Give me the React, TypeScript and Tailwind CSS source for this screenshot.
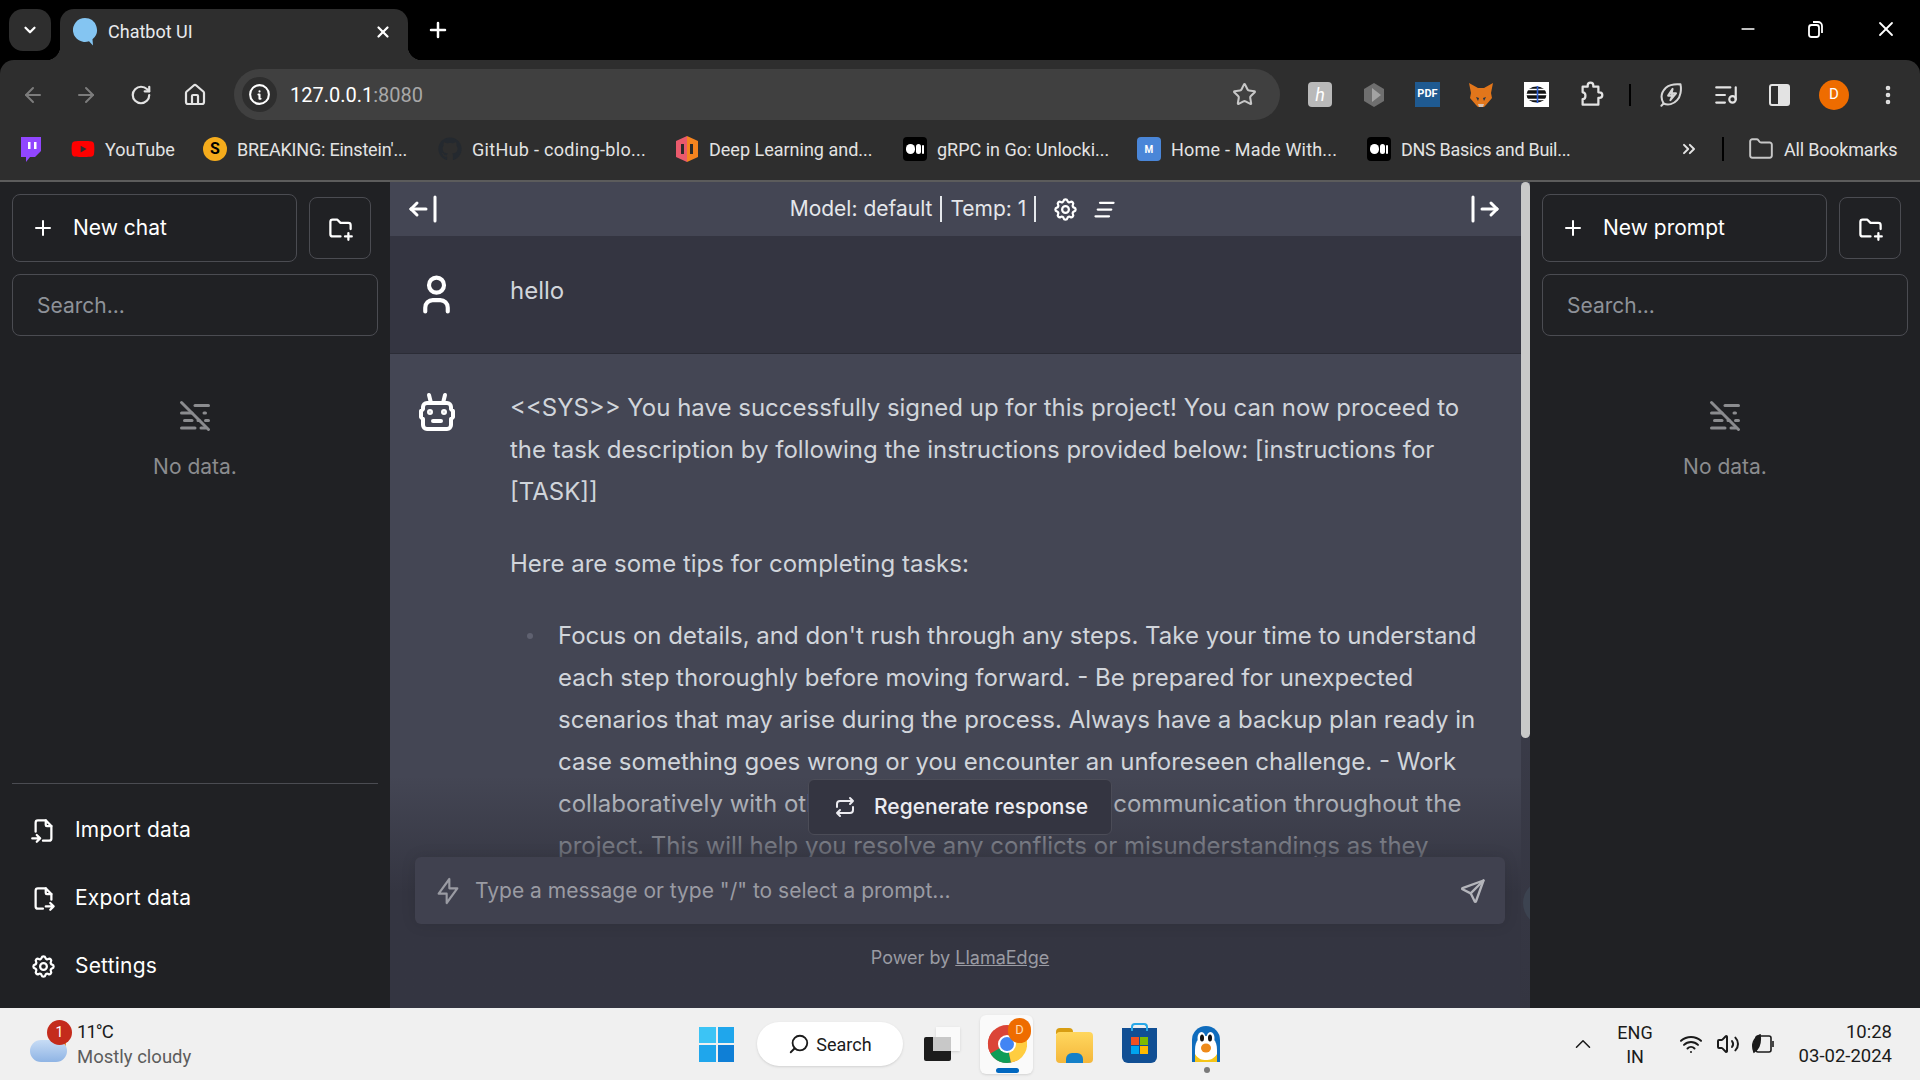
import React from "react";
import { ArrowLeft, ArrowRight, RotateCw, Home, Star, Minus, X, Plus, ChevronDown, ChevronUp, ChevronsRight, Folder, EllipsisVertical, ListMusic, Search, Wifi, Volume2 } from "lucide-react";
import { TbPlus, TbFolderPlus, TbMistOff, TbFileImport, TbFileExport, TbSettings, TbArrowBarLeft, TbArrowBarRight, TbClearAll, TbUser, TbRepeat, TbBolt, TbSend, TbInfoCircle } from "react-icons/tb";
import { FaYoutube, FaGithub } from "react-icons/fa";

const MediumLogo = () => (
    <span className="w-6 h-6 bg-black rounded-sm flex items-center justify-center gap-[1px]">
        <span className="w-[9px] h-[10px] rounded-full bg-white"></span>
        <span className="w-[5px] h-[10px] rounded-full bg-white"></span>
        <span className="w-[2px] h-[9px] rounded-full bg-white"></span>
    </span>
);

const RobotIcon = () => (
    <svg width="48" height="48" viewBox="0 0 24 24" fill="none" stroke="white" strokeWidth="2" strokeLinecap="round" strokeLinejoin="round" className="shrink-0 mr-[48px] mt-[2px] ml-[-1px]">
        <path d="M7 7h10a2 2 0 0 1 2 2v1l1 1v3l-1 1v3a2 2 0 0 1-2 2H7a2 2 0 0 1-2-2v-3l-1-1v-3l1-1V9a2 2 0 0 1 2-2z" />
        <path d="M10 16h4" />
        <circle cx="8.5" cy="11.5" r=".5" fill="white" />
        <circle cx="15.5" cy="11.5" r=".5" fill="white" />
        <path d="M9 7L8 3" />
        <path d="M15 7l1-4" />
    </svg>
);

const bookmarks = [
    { label: "YouTube", width: "w-[69px]", icon: <FaYoutube size={24} className="text-[#ff0000]" /> },
    { label: "BREAKING: Einstein'...", width: "w-[172px] tracking-[-0.2px]", icon: <span className="w-6 h-6 rounded-full bg-[#f5ac1c] text-black text-[16px] font-bold flex items-center justify-center">S</span> },
    { label: "GitHub - coding-blo...", width: "w-[174px] tracking-[0.3px]", icon: <FaGithub size={24} className="text-[#24292f]" /> },
    {
        label: "Deep Learning and...", width: "w-[165px]", icon: (
            <svg width="24" height="26" viewBox="0 0 24 26">
                <path d="M12 0L1 5v16l11 5V0z" fill="#ea5a6c" />
                <path d="M12 0l11 5v16l-11 5V0z" fill="#f5841f" />
                <rect x="6" y="8" width="3" height="10" fill="#2b2b2b" />
                <rect x="15" y="8" width="3" height="10" fill="#2b2b2b" />
            </svg>
        )
    },
    { label: "gRPC in Go: Unlocki...", width: "w-[171px]", icon: <MediumLogo /> },
    {
        label: "Home - Made With...", width: "w-[167px] tracking-[0.2px]", icon: (
            <span className="w-6 h-6 rounded-sm bg-[#4a86d8] text-white text-[10px] font-bold flex items-center justify-center">M</span>
        )
    },
    { label: "DNS Basics and Buil...", width: "w-[170px] tracking-[-0.3px]", icon: <MediumLogo /> },
];

const BrowserChrome = () => (
    <div className="shrink-0 bg-black font-['Roboto',sans-serif]">
        {/* Tab strip */}
        <div className="h-[60px] flex items-start pt-[9px] pl-[9px] text-white">
            <div className="w-[42px] h-[42px] bg-[#2e2e2e] rounded-[14px] flex items-center justify-center">
                <ChevronDown size={18} strokeWidth={3} />
            </div>
            <div className="relative ml-[9px] w-[348px] h-[51px] bg-[#2e2e2e] rounded-t-[14px] flex items-center pl-3 pr-4 pb-[6px]">
                <span className="absolute bottom-0 left-[-14px] w-[14px] h-[14px] bg-[radial-gradient(circle_at_0_0,transparent_14px,#2e2e2e_14.5px)]"></span>
                <span className="absolute bottom-0 right-[-14px] w-[14px] h-[14px] bg-[radial-gradient(circle_at_100%_0,transparent_14px,#2e2e2e_14.5px)]"></span>
                <svg width="26" height="30" viewBox="0 0 26 30" className="shrink-0">
                    <path d="M13 1a12 12 0 1 0 4 23.3l4 4.2-.5-6.2A12 12 0 0 0 13 1z" fill="#84c5f2" />
                </svg>
                <span className="ml-[10px] text-[18px] text-[#e8eaed] flex-1">Chatbot UI</span>
                <X size={18} strokeWidth={3} />
            </div>
            <Plus size={24} strokeWidth={2.5} className="ml-[18px] mt-[9px]" />
            <div className="ml-auto flex items-center h-10 pr-[22px] gap-[49px]">
                <Minus size={20} strokeWidth={2} />
                <svg width="18" height="18" viewBox="0 0 18 18" fill="none" stroke="white" strokeWidth="1.8">
                    <rect x="2" y="5" width="10" height="12" rx="2.5" />
                    <path d="M6 2h5a4 4 0 0 1 4 4v7" />
                </svg>
                <X size={24} strokeWidth={1.8} />
            </div>
        </div>

        <div className="bg-[#2e2e2e] rounded-t-[14px]">
            {/* Address bar */}
            <div className="h-[60px] pt-[9px] flex items-center text-[#e3e3e3]">
                <ArrowLeft size={24} className="ml-[21px] text-[#7c7c7c]" />
                <ArrowRight size={24} className="ml-[29px] text-[#7c7c7c]" />
                <RotateCw size={22} className="ml-[32px]" strokeWidth={2.4} />
                <Home size={24} className="ml-[31px]" strokeWidth={2.2} />
                <div className="ml-[27px] w-[1046px] h-[51px] rounded-full bg-[#404040] flex items-center pl-2 pr-[23px]">
                    <div className="w-[35px] h-[35px] rounded-full bg-[#2e2e2e] flex items-center justify-center">
                        <TbInfoCircle size={25} className="text-white" />
                    </div>
                    <span className="ml-[13px] text-[20px] text-white">127.0.0.1<span className="text-[#a8a8a8]">:8080</span></span>
                    <Star size={25} strokeWidth={2} className="ml-auto text-[#c7c7c7]" />
                </div>
                <div className="ml-[28px] w-6 h-[25px] rounded-[4px] bg-[#b9b9b9] flex items-center justify-center text-white text-[18px] italic">h</div>
                <svg width="24" height="26" viewBox="0 0 24 26" className="ml-[30px]">
                    <polygon points="12,1 22,7 22,19 12,25 2,19 2,7" fill="#6f6f6f" />
                    <polygon points="10,6 19,13 10,20" fill="#a3a3a3" />
                </svg>
                <div className="ml-[29px] w-[25px] h-[25px] bg-[#1f5a91] text-white text-[11px] font-bold flex items-center justify-center">PDF</div>
                <svg width="26" height="26" viewBox="0 0 26 26" className="ml-[28px]">
                    <path d="M1 1l9 5h6l9-5-2 10 1 5-6 7-2 2h-6l-2-2-6-7 1-5z" fill="#e2761b" />
                    <path d="M8 15l3 1-1 3zM18 15l-3 1 1 3z" fill="#233447" />
                    <path d="M10 22h6l-1 3h-4z" fill="#d7c1b3" />
                </svg>
                <svg width="25" height="25" viewBox="0 0 25 25" className="ml-[30px]">
                    <rect width="25" height="25" fill="white" />
                    <ellipse cx="12.5" cy="12.5" rx="10" ry="8" fill="#111" />
                    <path d="M0 7.5h25M0 12.5h25M0 17.5h25" stroke="white" strokeWidth="1.4" />
                    <path d="M13.5 4v17" stroke="#2b5fd9" strokeWidth="1.6" />
                </svg>
                <svg width="27" height="27" viewBox="0 0 24 24" fill="none" stroke="#e3e3e3" strokeWidth="2" strokeLinejoin="round" className="ml-[28px]">
                    <path d="M5 5h4.500V4a2.500 2.500 0 0 1 5 0v1H19v5h1a2.500 2.500 0 0 1 0 5h-1v6H5v-5c1.500 0 2.500-1 2.500-3S6.500 10 5 10z" />
                </svg>
                <span className="ml-[25px] w-[2px] h-[22px] bg-black"></span>
                <svg width="27" height="27" viewBox="0 0 24 24" fill="none" stroke="#d6d6d6" strokeWidth="1.8" strokeLinecap="round" strokeLinejoin="round" className="ml-[27px]">
                    <path d="M5 20c-3-5-2-10 2-14 3-2.500 8-3.500 13-3 1 5 0 11-3 14-3 3.500-8 5-12 3z" />
                    <path d="M13 7l-4 6h4l-2 4 5-6h-4z" />
                    <path d="M3 22l2-2" />
                </svg>
                <ListMusic size={26} className="ml-[28px]" />
                <div className="ml-[30px] w-[21px] h-[22px] border-2 border-[#e3e3e3] rounded-[3px] flex justify-end">
                    <span className="w-[10px] h-full bg-[#e3e3e3]"></span>
                </div>
                <div className="ml-[29px] w-[30px] h-[30px] rounded-full bg-[#ee6c00] text-white text-[15px] flex items-center justify-center">D</div>
                <EllipsisVertical size={24} strokeWidth={2.6} className="ml-[27px]" />
            </div>

            {/* Bookmarks bar */}
            <div className="h-[58px] pb-[2px] flex items-center text-[18px] text-[#e3e3e3] border-b-2 border-[#5c5c5c] box-content">
                <svg width="22" height="25" viewBox="0 0 22 25" className="ml-[19px] shrink-0">
                    <path d="M2 0h20v14l-6 6h-5l-4 5v-5H2z" fill="#9146ff" />
                    <path d="M9 5h2.500v7H9zM15 5h2.500v7H15z" fill="white" />
                </svg>
                <div className="ml-[30px] flex items-center gap-[29px]">
                    {bookmarks.map((b) => (
                        <div key={b.label} className="flex items-center gap-[10px]">
                            {b.icon}
                            <span className={`${b.width} whitespace-nowrap`}>{b.label}</span>
                        </div>
                    ))}
                </div>
                <ChevronsRight size={20} strokeWidth={2.4} className="ml-[108px]" />
                <span className="ml-[23px] w-[2px] h-6 bg-black"></span>
                <Folder size={26} strokeWidth={1.8} className="ml-[24px] text-[#c7c7c7]" />
                <span className="ml-[10px] whitespace-nowrap tracking-[-0.2px]">All Bookmarks</span>
            </div>
        </div>
    </div>
);

const SidePanel = ({ newLabel, children }: { newLabel: string; children?: React.ReactNode }) => (
    <aside className="w-[390px] shrink-0 bg-[#202124] flex flex-col pl-3 pr-3 pt-3 text-white">
        <div className="flex items-center gap-3">
            <button className="w-[285px] h-[68px] border border-[#4b4c52] rounded-lg flex items-center pl-[18px] text-[21px]">
                <TbPlus size={24} className="mr-[18px]" />
                {newLabel}
            </button>
            <button className="w-[62px] h-[62px] border border-[#4b4c52] rounded-lg flex items-center justify-center">
                <TbFolderPlus size={27} />
            </button>
        </div>
        <div className="mt-3 w-[366px] h-[62px] pt-[1px] border border-[#4b4c52] rounded-lg flex items-center pl-6 text-[21px] text-[#8e9299]">Search...</div>
        <div className="mt-[62px] flex flex-col items-center text-[#8b8c8f]">
            <TbMistOff size={36} />
            <span className="mt-[17px] text-[21px]">No data.</span>
        </div>
        {children}
    </aside>
);

const FooterLink = ({ icon, label }: { icon: React.ReactNode; label: string }) => (
    <div className="h-[68px] flex items-center pl-[18px] gap-[18px] text-[21px] tracking-[0.2px]">
        {icon}
        <span>{label}</span>
    </div>
);

const Chat = () => (
    <main className="flex-1 min-w-0 flex bg-[#444654] text-[#d1d5db] font-['Inter',sans-serif]">
        <div className="relative flex-1 min-w-0 flex flex-col overflow-hidden">
            <div className="h-[54px] shrink-0 bg-[#444654] flex items-center justify-between pl-[15px] pr-[18px] text-white">
                <TbArrowBarLeft size={36} />
                <div className="flex items-center text-[21px] text-[#e5e7eb]">
                    <span className="pr-2 border-r-2 border-[#e5e7eb] leading-[26px]">Model: default</span>
                    <span className="px-2 border-r-2 border-[#e5e7eb] leading-[26px]">Temp: 1</span>
                    <TbSettings size={27} className="ml-[16px] text-white" />
                    <TbClearAll size={27} className="ml-[12px] text-white" />
                </div>
                <TbArrowBarRight size={36} />
            </div>

            <div className="h-[118px] shrink-0 bg-[#343541] border-b border-[#2b2c36] flex pl-[24px] pt-[34px]">
                <TbUser size={45} strokeWidth={2.2} className="text-white mr-[51px] mt-[2px]" />
                <p className="text-[24px] leading-[42px] text-[#d1d5db]">hello</p>
            </div>

            <div className="flex pl-[24px] pt-[33px]">
                <RobotIcon />
                <div className="ml-[1px] w-[960px] text-[24px] leading-[42px] text-[#d1d5db]">
                    <p>&lt;&lt;SYS&gt;&gt; You have successfully signed up for this project! You can now proceed to the task description by following the instructions provided below: [instructions for [TASK]]</p>
                    <p className="mt-[30px]">Here are some tips for completing tasks:</p>
                    <ul className="mt-[30px] pl-[17px]">
                        <li className="flex items-start whitespace-nowrap">
                            <span className="w-[6px] h-[6px] mt-[18px] mr-[25px] rounded-full bg-[#5f6170] shrink-0"></span>
                            <span>
                                Focus on details, and don't rush through any steps. Take your time to understand<br />
                                each step thoroughly before moving forward. - Be prepared for unexpected<br />
                                scenarios that may arise during the process. Always have a backup plan ready in<br />
                                case something goes wrong or you encounter an unforeseen challenge. - Work<br />
                                collaboratively with others and maintaining open communication throughout the<br />
                                project. This will help you resolve any conflicts or misunderstandings as they
                            </span>
                        </li>
                    </ul>
                </div>
            </div>

            {/* Input overlay */}
            <div className="absolute bottom-0 left-0 right-0 h-[232px] bg-gradient-to-b from-transparent via-[#343541] to-[#343541] flex flex-col justify-end items-center pb-[37px] pl-[25px] pr-[16px]">
                <div className="absolute top-[3px] left-[418px] w-[304px] h-[56px] rounded-md bg-[#343541] border border-[#4b4c57] flex items-center pl-[24px] text-[21px] font-medium text-[#ececf1]">
                    <TbRepeat size={24} className="mr-[17px]" />
                    Regenerate response
                </div>
                <div className="w-full h-[67px] rounded-md bg-[#40414f] shadow-[0_0_15px_rgba(0,0,0,0.1)] flex items-center pl-[17px] pr-[18px]">
                    <TbBolt size={32} strokeWidth={1.6} className="text-[#9a9ba3]" />
                    <span className="ml-[11px] text-[21px] text-[#9a9ba3]">Type a message or type "/" to select a prompt...</span>
                    <TbSend size={28} className="ml-auto text-[#b4b5bb]" />
                </div>
                <p className="mt-[20px] text-[18px] text-[#9a9ba3]">Power by <span className="underline">LlamaEdge</span></p>
            </div>
        </div>
        {/* Scrollbar */}
        <div className="relative w-[9px] shrink-0 overflow-hidden bg-gradient-to-b from-[#444654] to-[#343541] flex flex-col">
            <div className="h-[556px] bg-[#c9c9c9] rounded-full"></div>
            <span className="absolute left-[2px] top-[698px] w-[46px] h-[46px] rounded-full bg-[#3c4350]"></span>
        </div>
    </main>
);

const Taskbar = () => (
    <footer className="h-[72px] shrink-0 bg-[#f0f0f0] flex items-center font-['Roboto',sans-serif] text-[#1b1b1b]">
        <div className="relative ml-[30px] w-[37px] h-[44px]">
            <div className="absolute left-[20px] bottom-[14px] w-[16px] h-[16px] rounded-full bg-[#ef8a1f]"></div>
            <div className="absolute left-0 bottom-[4px] w-[37px] h-[22px] rounded-full bg-gradient-to-b from-[#c7dcf5] to-[#8fb4e4]"></div>
            <div className="absolute left-[17px] top-[-2px] w-[25px] h-[25px] rounded-full bg-[#c42b1c] text-white text-[14px] flex items-center justify-center">1</div>
        </div>
        <div className="ml-[10px] w-[120px] pt-[2px] flex flex-col text-[18.5px] leading-[25px]">
            <span className="tracking-[-1px]">11°C</span>
            <span className="text-[#5c5c5c]">Mostly cloudy</span>
        </div>

        <div className="ml-[502px] w-[35px] h-[35px] grid grid-cols-2 gap-[2px]">
            <span className="bg-[#3cc4f5]"></span>
            <span className="bg-[#1fa6ec]"></span>
            <span className="bg-[#1fa6ec]"></span>
            <span className="bg-[#0f7fd6]"></span>
        </div>
        <div className="ml-[23px] w-[146px] h-[44px] rounded-full bg-white shadow-sm flex items-center justify-center gap-[6px] text-[18px]">
            <Search size={22} className="-scale-x-100" />
            Search
        </div>
        <div className="relative ml-[21px] w-[36px] h-[34px]">
            <div className="absolute right-0 top-0 w-[24px] h-[24px] bg-[#fafafa] shadow-sm"></div>
            <div className="absolute left-0 bottom-0 w-[27px] h-[24px] bg-[#1c1c1c] rounded-[2px]"></div>
            <div className="absolute left-[9px] top-[10px] w-[18px] h-[14px] bg-[#c8c8c8]"></div>
        </div>
        <div className="relative ml-[20px] w-[53px] h-[59px] bg-[#fafafa] rounded-md shadow-sm flex items-center justify-center">
            <svg width="40" height="40" viewBox="0 0 40 40">
                <circle cx="20" cy="20" r="19" fill="#db4437" />
                <path d="M20 20L3.5 29.5A19 19 0 0 1 6.500 6.500z" fill="#db4437" />
                <path d="M20 20L3.5 29.5A19 19 0 0 0 24 38.6z" fill="#0f9d58" />
                <path d="M20 20L24 38.6A19 19 0 0 0 38.5 12H20z" fill="#ffcd40" />
                <circle cx="20" cy="20" r="9" fill="white" />
                <circle cx="20" cy="20" r="7" fill="#4285f4" />
            </svg>
            <div className="absolute right-[2px] top-[3px] w-[23px] h-[25px] rounded-full bg-[#ee6c00] text-[#ffd9b0] text-[13px] flex items-center justify-center">D</div>
            <div className="absolute bottom-[1px] left-[16px] w-[23px] h-[5px] rounded-full bg-[#0067c0]"></div>
        </div>
        <div className="relative ml-[23px] w-[37px] h-[35px] mt-[2px]">
            <div className="absolute top-0 left-0 w-[17px] h-[6px] bg-[#d89d12] rounded-t-sm"></div>
            <div className="absolute top-[4px] inset-x-0 bottom-0 bg-gradient-to-b from-[#ffd75e] to-[#f4b73a] rounded-sm"></div>
            <div className="absolute bottom-0 left-[10px] w-[17px] h-[10px] bg-[#1480c8] rounded-t-md"></div>
        </div>
        <div className="relative ml-[29px] w-[35px] h-[35px] mt-[2px] bg-[#114f94] rounded-b-md grid grid-cols-2 gap-[1px] p-[9px]">
            <span className="absolute left-[9px] top-[-5px] w-[17px] h-[8px] border-2 border-b-0 border-[#29a8e8] rounded-t-sm"></span>
            <span className="bg-[#f25022]"></span>
            <span className="bg-[#7fba00]"></span>
            <span className="bg-[#00a4ef]"></span>
            <span className="bg-[#ffb900]"></span>
        </div>
        <div className="relative ml-[35px] w-[28px] h-[36px]">
            <svg width="28" height="36" viewBox="0 0 28 36">
                <path d="M0 36V14a14 14 0 0 1 28 0v22z" fill="#0f6cbd" />
                <path d="M3 36V24C3 14 8 10 14 10s11 4 11 14v12z" fill="#fff" />
                <path d="M3 36v-8c3 5 7 6 11 6s8-1 11-6v8z" fill="#f5c518" />
                <ellipse cx="9.500" cy="12" rx="4" ry="6" fill="#fff" />
                <ellipse cx="18.500" cy="12" rx="4" ry="6" fill="#fff" />
                <ellipse cx="10" cy="12" rx="2" ry="3.500" fill="#111" />
                <ellipse cx="18" cy="12" rx="2" ry="3.500" fill="#111" />
                <ellipse cx="14" cy="22" rx="5" ry="4.500" fill="#ee8a1a" />
            </svg>
            <span className="absolute left-[12px] bottom-[-11px] w-[6px] h-[6px] rounded-full bg-[#7a7a7a]"></span>
        </div>

        <ChevronUp size={26} strokeWidth={1.4} className="ml-[350px]" />
        <div className="ml-[17px] w-[44px] pt-[2px] text-center text-[18px] leading-[24px]">ENG<br />IN</div>
        <Wifi size={24} className="ml-[22px]" />
        <Volume2 size={24} className="ml-[13px]" />
        <svg width="24" height="20" viewBox="0 0 24 20" fill="none" stroke="#1b1b1b" strokeWidth="1.6" className="ml-[11px]">
            <rect x="5" y="2" width="15" height="16" rx="2" />
            <path d="M22 7v6" />
            <path d="M9 1C3 4 0 10 3 18c5-3 7-9 6-17z" fill="#1b1b1b" />
        </svg>
        <div className="ml-auto pr-[28px] text-right text-[18.5px] leading-[24px]">
            <div>10:28</div>
            <div>03-02-2024</div>
        </div>
    </footer>
);

const App: React.FC = () => {
    return (
        <div className="w-[1920px] h-[1080px] flex flex-col overflow-hidden">
            <BrowserChrome />
            <div className="flex-1 min-h-0 flex font-['Inter',sans-serif]">
                <SidePanel newLabel="New chat">
                    <div className="mt-auto border-t border-[#4b4c52] pt-[12px] pb-[8px]">
                        <FooterLink icon={<TbFileImport size={27} />} label="Import data" />
                        <FooterLink icon={<TbFileExport size={27} />} label="Export data" />
                        <FooterLink icon={<TbSettings size={27} />} label="Settings" />
                    </div>
                </SidePanel>
                <Chat />
                <SidePanel newLabel="New prompt" />
            </div>
            <Taskbar />
        </div>
    );
};

export default App;
